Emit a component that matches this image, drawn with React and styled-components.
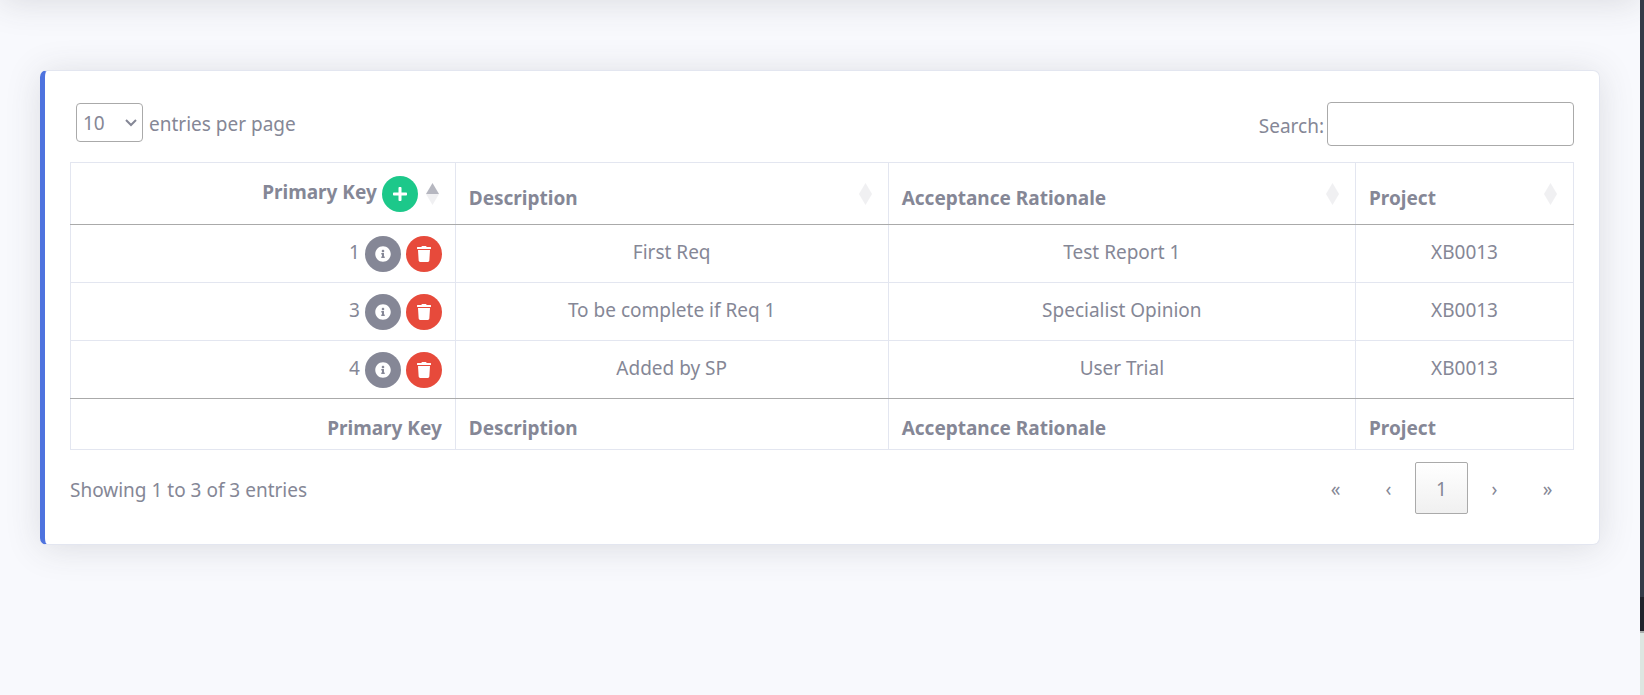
import React from "react";
import styled, { createGlobalStyle } from "styled-components";
import { FaPlus, FaInfoCircle, FaTrash } from "react-icons/fa";

const GlobalStyle = createGlobalStyle`
  *, *::before, *::after { box-sizing: border-box; }
  body {
    margin: 0;
    background: #f8f9fd;
    color: #858796;
    font-family: "Segoe UI", "Noto Sans", sans-serif;
    font-size: 19px;
    line-height: 30px;
  }
  button, input, select { font: inherit; color: inherit; }
`;

const Page = styled.div`
  display: flex;
  min-height: 100vh;
`;

const Main = styled.main`
  flex: 1;
  min-width: 0;
  overflow: hidden;
`;

const cardShadow = "0 3px 35px 0 rgba(58, 59, 69, 0.15)";

const TopBar = styled.div`
  height: 100px;
  margin: -100px 0 70px;
  box-shadow: ${cardShadow};
`;

const Card = styled.section`
  margin: 0 40px;
  padding: 31px 25px 30px;
  background: #fff;
  border: 1px solid #e3e6f0;
  border-left: 5px solid #4e73df;
  border-radius: 7px;
  box-shadow: ${cardShadow};
`;

const Edge = styled.div`
  display: flex;
  flex-direction: column;
  width: 4px;
`;

const EdgeBand = styled.div`
  flex: ${(p) => p.$share};
  background: ${(p) => p.$color};
`;

const Bar = styled.div`
  display: flex;
  justify-content: space-between;
  align-items: center;
`;

const LengthLabel = styled.label`
  display: flex;
  align-items: center;
  gap: 6px;
  padding-left: 6px;
`;

const SelectBox = styled.span`
  display: grid;
  align-items: center;
  margin-bottom: 3px;
  > * { grid-area: 1 / 1; }
  > svg {
    justify-self: end;
    margin-right: 6px;
    pointer-events: none;
  }
`;

const Select = styled.select`
  appearance: none;
  width: 67px;
  height: 39px;
  padding: 0 6px;
  background: transparent;
  border: 1px solid #aaa;
  border-radius: 4px;
`;

const SearchLabel = styled.label`
  display: flex;
  align-items: center;
  gap: 3px;
`;

const SearchText = styled.span`
  padding-top: 4px;
`;

const SearchInput = styled.input`
  width: 247px;
  height: 44px;
  padding: 6px;
  background: transparent;
  border: 1px solid #aaa;
  border-radius: 4px;
`;

const Table = styled.table`
  width: 100%;
  margin: 16px 0 12px;
  table-layout: fixed;
  border-collapse: collapse;
  th, td { border: 1px solid #e3e6f0; }
  thead th { border-bottom-color: #aaa; }
  tbody tr:first-child td { border-top-color: #aaa; }
  tbody tr:last-child td { border-bottom-color: #aaa; }
  tfoot th { border-top-color: #aaa; }
`;

const Column = styled.col`
  width: ${(p) => p.$width};
`;

const HeadCell = styled.th`
  height: 62px;
  padding: 0 16px 0 13px;
  text-align: left;
`;

const HeadContent = styled.div`
  display: flex;
  align-items: center;
  justify-content: ${(p) => (p.$end ? "flex-end" : "space-between")};
  gap: 5px;
`;

const HeadText = styled.span`
  padding-top: 8px;
`;

const KeyText = styled.span`
  padding-bottom: 4px;
`;

const SortButton = styled.button`
  display: flex;
  margin-left: ${(p) => (p.$active ? "3px" : "0")};
  padding: 0;
  border: 0;
  background: none;
  cursor: pointer;
`;

const Cell = styled.td`
  height: 58px;
  padding: 10px 12px 14px;
  text-align: center;
`;

const KeyCell = styled.td`
  padding: 0 13px;
`;

const KeyContent = styled.div`
  display: flex;
  align-items: center;
  justify-content: flex-end;
  gap: 5px;
`;

const CircleButton = styled.button`
  display: flex;
  align-items: center;
  justify-content: center;
  width: 36px;
  height: 36px;
  padding: 0;
  border: 0;
  border-radius: 50%;
  background: ${(p) => p.$color};
  color: #fff;
  font-size: ${(p) => p.$icon || 16}px;
  cursor: pointer;
`;

const FootCell = styled.th`
  height: 51px;
  padding: 14px 13px 6px;
  text-align: ${(p) => (p.$end ? "right" : "left")};
`;

const Pager = styled.nav`
  display: flex;
`;

const PageButton = styled.button`
  width: 53px;
  height: 52px;
  padding: 2px 0 0;
  border: 1px solid ${(p) => (p.$current ? "#aaa" : "transparent")};
  border-radius: 2px;
  background: ${(p) => (p.$current ? "linear-gradient(#fff, #f0f0f0)" : "none")};
  cursor: pointer;
`;

const InfoText = styled.div`
  padding-top: 4px;
`;

function SortIcon({ active }) {
  return (
    <svg width="13" height="22" viewBox="0 0 13 22" fill="#858796" aria-hidden="true">
      <path d="M0 11 6.500 0 13 11z" opacity={active ? 0.6 : 0.125} />
      <path d="M0 11 6.500 22 13 11z" opacity="0.125" />
    </svg>
  );
}

const columns = ["Description", "Acceptance Rationale", "Project"];
const rows = [
  { id: 1, cells: ["First Req", "Test Report 1", "XB0013"] },
  { id: 3, cells: ["To be complete if Req 1", "Specialist Opinion", "XB0013"] },
  { id: 4, cells: ["Added by SP", "User Trial", "XB0013"] },
];
const pages = [
  ["«", "First"],
  ["‹", "Previous"],
  ["1", "Page 1"],
  ["›", "Next"],
  ["»", "Last"],
];

export default function App() {
  return (
    <Page>
      <GlobalStyle />
      <Main>
        <TopBar />
        <Card>
          <Bar>
            <LengthLabel>
              <SelectBox>
                <Select defaultValue="10">
                  <option>10</option>
                  <option>25</option>
                  <option>50</option>
                  <option>100</option>
                </Select>
                <svg width="12" height="8" viewBox="0 0 12 8" fill="none" stroke="#858796" strokeWidth="2" aria-hidden="true">
                  <path d="M1 1l5 5 5-5" />
                </svg>
              </SelectBox>
              entries per page
            </LengthLabel>
            <SearchLabel>
              <SearchText>Search:</SearchText>
              <SearchInput type="search" />
            </SearchLabel>
          </Bar>
          <Table>
            <colgroup>
              <Column $width="25.6%" />
              <Column $width="28.8%" />
              <Column $width="31.1%" />
              <Column $width="14.5%" />
            </colgroup>
            <thead>
              <tr>
                <HeadCell>
                  <HeadContent $end>
                    <KeyText>Primary Key</KeyText>
                    <CircleButton $color="#1cc88a" aria-label="Add">
                      <FaPlus />
                    </CircleButton>
                    <SortButton $active aria-label="Sort by Primary Key">
                      <SortIcon active />
                    </SortButton>
                  </HeadContent>
                </HeadCell>
                {columns.map((name) => (
                  <HeadCell key={name}>
                    <HeadContent>
                      <HeadText>{name}</HeadText>
                      <SortButton aria-label={`Sort by ${name}`}>
                        <SortIcon />
                      </SortButton>
                    </HeadContent>
                  </HeadCell>
                ))}
              </tr>
            </thead>
            <tbody>
              {rows.map((row) => (
                <tr key={row.id}>
                  <KeyCell>
                    <KeyContent>
                      <KeyText>{row.id}</KeyText>
                      <CircleButton $color="#858796" aria-label="Details">
                        <FaInfoCircle />
                      </CircleButton>
                      <CircleButton $color="#e74a3b" aria-label="Delete">
                        <FaTrash />
                      </CircleButton>
                    </KeyContent>
                  </KeyCell>
                  {row.cells.map((text) => (
                    <Cell key={text}>{text}</Cell>
                  ))}
                </tr>
              ))}
            </tbody>
            <tfoot>
              <tr>
                <FootCell $end>Primary Key</FootCell>
                {columns.map((name) => (
                  <FootCell key={name}>{name}</FootCell>
                ))}
              </tr>
            </tfoot>
          </Table>
          <Bar>
            <InfoText>Showing 1 to 3 of 3 entries</InfoText>
            <Pager aria-label="Pagination">
              {pages.map(([label, name]) => (
                <PageButton key={name} aria-label={name} $current={label === "1"}>
                  {label}
                </PageButton>
              ))}
            </Pager>
          </Bar>
        </Card>
      </Main>
      <Edge>
        <EdgeBand $share={597} $color="#343b48" />
        <EdgeBand $share={34} $color="#20212a" />
        <EdgeBand $share={2} $color="#a9adac" />
        <EdgeBand $share={62} $color="#dde6e1" />
      </Edge>
    </Page>
  );
}
